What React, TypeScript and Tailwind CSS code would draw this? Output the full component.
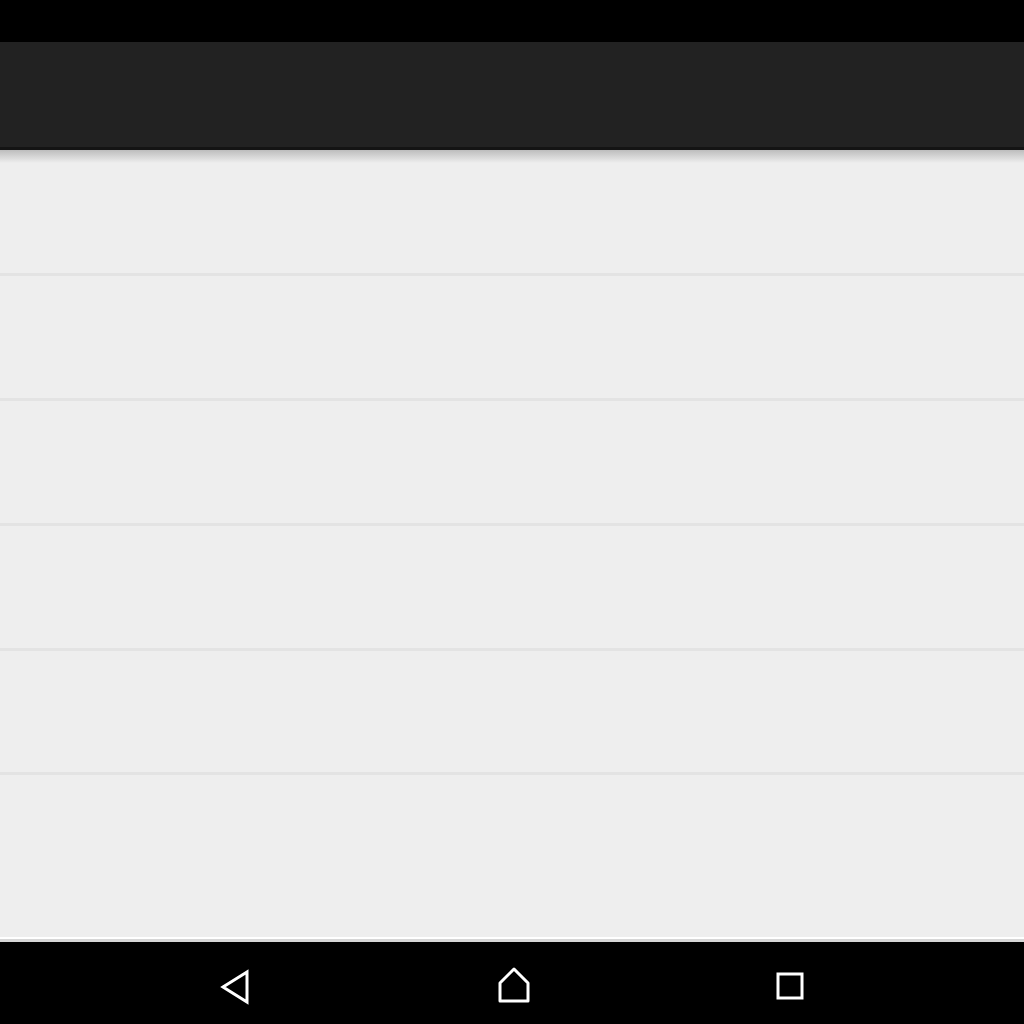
import React from "react";

export default function App() {
  return (
    <div className="w-[1024px] h-[1024px] flex flex-col bg-black overflow-hidden" style={{ fontFamily: "Roboto, sans-serif" }}>
      <div className="h-[42px] bg-black shrink-0" />
      <div className="h-[105px] bg-[#222222] shrink-0" />
      <div className="h-[3px] bg-[#141414] shrink-0" />
      <div className="relative flex-1 bg-[#eeeeee] flex flex-col">
        <div className="absolute top-0 left-0 right-0 h-[13px] bg-gradient-to-b from-[#bdbdbd] to-[#eeeeee]" />
        <div className="h-[126px] border-b-[3px] border-[#e3e3e3]" />
        <div className="h-[125px] border-b-[3px] border-[#e3e3e3]" />
        <div className="h-[125px] border-b-[3px] border-[#e3e3e3]" />
        <div className="h-[125px] border-b-[3px] border-[#e3e3e3]" />
        <div className="h-[124px] border-b-[3px] border-[#e3e3e3]" />
        <div className="flex-1" />
        <div className="h-[2px] bg-white" />
        <div className="h-[3px] bg-[#d6d6d6]" />
      </div>
      <div className="h-[82px] shrink-0 bg-black relative">
        <svg className="absolute left-[219px] top-[27px]" width="34" height="36" viewBox="0 0 34 36">
          <path d="M28 3 L4 18 L28 33 Z" fill="none" stroke="#fff" strokeWidth="3" strokeLinejoin="miter" />
        </svg>
        <svg className="absolute left-[495px] top-[24px]" width="38" height="38" viewBox="0 0 38 38">
          <path d="M19 3 L33 17 L33 35 L5 35 L5 17 Z" fill="none" stroke="#fff" strokeWidth="3" strokeLinejoin="round" />
        </svg>
        <svg className="absolute left-[775px] top-[29px]" width="30" height="30" viewBox="0 0 30 30">
          <rect x="3" y="3" width="24" height="24" fill="none" stroke="#fff" strokeWidth="3" />
        </svg>
      </div>
    </div>
  );
}
